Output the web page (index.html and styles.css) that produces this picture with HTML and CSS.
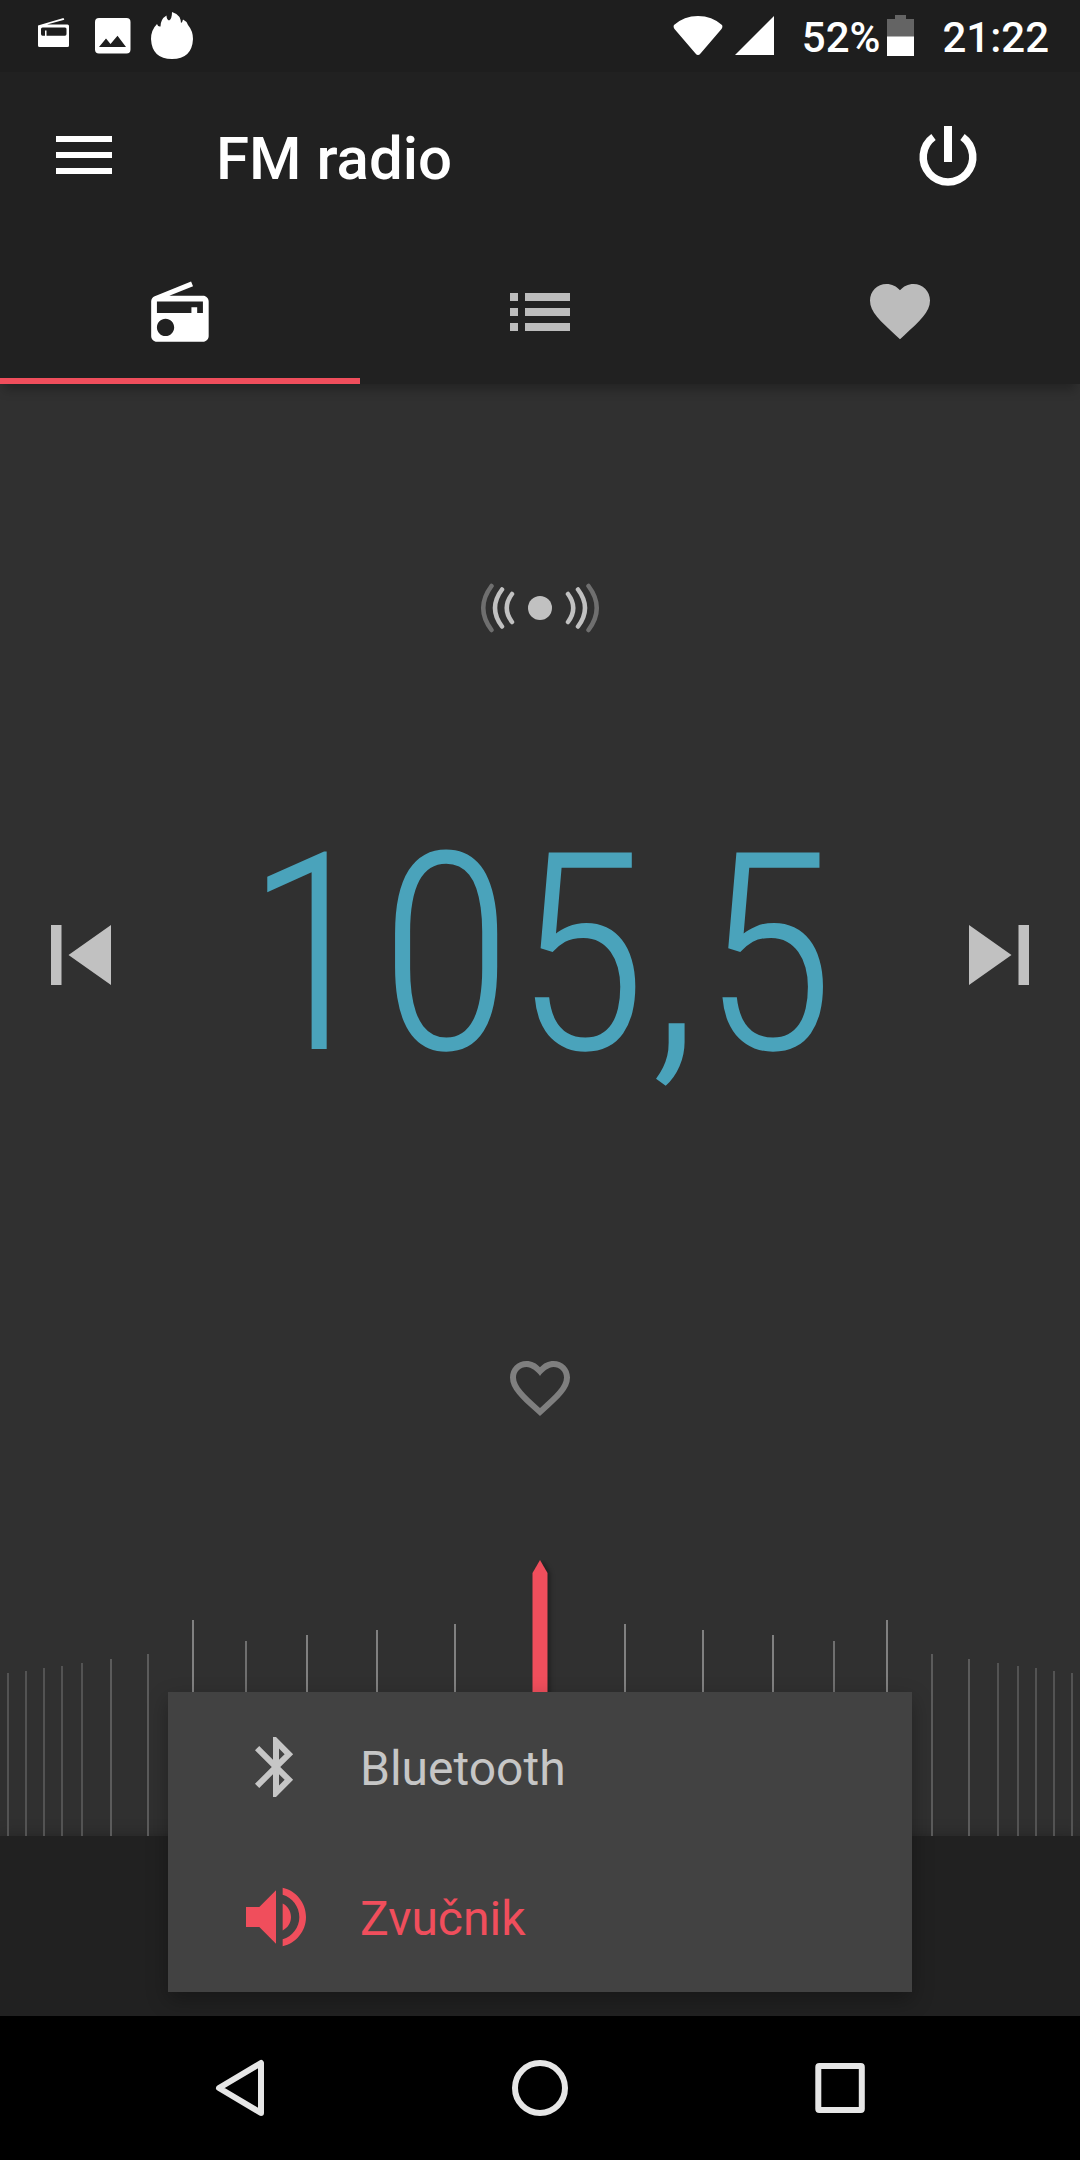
FILE: index.html
```html
<!DOCTYPE html>
<html lang="hr">
<head>
    <meta charset="utf-8">
    <title>FM radio</title>
    <link rel="stylesheet" href="styles.css">
</head>
<body>
    <div class="status-bar">
        <div class="notifications">
            <svg class="status-radio" width="31" height="30" viewBox="0 0 31 30">
                <path fill-rule="evenodd" d="M0 7.5L25.500 0l.8 1.700L9 6.500H29.500q1.500 0 1.500 1.500V27.500q0 1.500-1.500 1.500H1.500Q0 29 0 27.500zM4.500 9.500Q3 9.500 3 11V16q0 1.700 1.500 1.700H7V12.500h1.500v5.200H27q1.500 0 1.500-1.700V11Q28.500 9.500 27 9.500z"/>
            </svg>
            <svg class="status-picture" width="36" height="36" viewBox="0 0 36 36">
                <path fill-rule="evenodd" d="M4 0H31.500Q35.500 0 35.500 4V31.500Q35.500 35.500 31.500 35.500H4Q0 35.500 0 31.500V4Q0 0 4 0zM4 29H31L22.500 17.800L15.500 26L11 20.500z"/>
            </svg>
            <svg class="status-fire" width="42" height="48" viewBox="0 0 42 48">
                <path d="M21 0Q26 1.500 28.500 5Q30 8 30 11Q31.500 10 32 7.500Q35.500 9 37 13Q42 19 42 27Q41 47 21 47Q1 47 0 27Q0 18 6 12Q7 15 9.500 14.500Q9.500 7 15.500 3.500Q15.500 7.500 18 8.500Q21 7 21 0z"/>
            </svg>
        </div>
        <div class="system">
            <svg class="wifi" width="50" height="40" viewBox="0 0 50 40">
                <path d="M1 9Q11 0 25 0T49 9Q50 11 48.500 13L27.500 37.500Q25 40.500 22.500 37.500L1.500 13Q0 11 1 9z"/>
            </svg>
            <svg class="cell" width="39" height="39" viewBox="0 0 39 39">
                <path d="M39 0V39H0z"/>
            </svg>
            <span class="percent">52%</span>
            <svg class="battery" width="27" height="41" viewBox="0 0 27 41">
                <path fill="#646464" d="M8 0H19V4H27V22H0V4H8z"/>
                <path d="M0 21.500H27V41H0z"/>
            </svg>
            <span class="clock">21:22</span>
        </div>
    </div>

    <div class="toolbar">
        <svg class="menu" width="56" height="38" viewBox="0 0 56 38">
            <path d="M0 0H56V6H0zM0 16H56V22H0zM0 32H56V38H0z"/>
        </svg>
        <h1>FM radio</h1>
        <svg class="power" width="60" height="60" viewBox="0 0 60 60">
            <path d="M26 0h8v36h-8z"/>
            <path fill="none" stroke="#fff" stroke-width="7.500" d="M15.500 11A24.800 24.800 0 1 0 44.500 11"/>
        </svg>
    </div>

    <div class="tabs">
        <div class="tab active">
            <svg width="69" height="69" viewBox="0.200 -0.200 24 24">
                <path d="M3.240 6.150C2.510 6.430 2 7.170 2 8v12c0 1.100.89 2 2 2h16c1.110 0 2-.9 2-2V8c0-1.110-.89-2-2-2H8.300l8.260-3.340L15.880 1 3.240 6.150zM7 20c-1.660 0-3-1.340-3-3s1.340-3 3-3 3 1.340 3 3-1.340 3-3 3zm13-8h-2v-2h-2v2H4V8h16v4z"/>
            </svg>
        </div>
        <div class="tab">
            <svg width="60" height="38" viewBox="0 0 60 38">
                <path d="M0 0H8V8H0zM15 0H60V8H15zM0 15H8V23H0zM15 15H60V23H15zM0 30H8V38H0zM15 30H60V38H15z"/>
            </svg>
        </div>
        <div class="tab">
            <svg width="72" height="72" viewBox="0 0.300 24 24">
                <path d="M12 21.350l-1.450-1.320C5.400 15.360 2 12.280 2 8.500 2 5.420 4.420 3 7.500 3c1.740 0 3.410.81 4.500 2.090C13.090 3.810 14.760 3 16.500 3 19.580 3 22 5.420 22 8.500c0 3.780-3.400 6.860-8.550 11.540L12 21.350z"/>
            </svg>
        </div>
    </div>

    <div class="player">
        <svg class="live" width="120" height="50" viewBox="-60 -25 120 50">
            <circle r="12" />
            <g class="waves">
                <path d="M-28-14Q-38.500 0-28 14M28-14Q38.500 0 28 14"/>
                <path d="M-38-18.500Q-52 0-38 18.500M38-18.500Q52 0 38 18.500"/>
                <path class="dim" d="M-48.500-22Q-65 0-48.500 22M48.500-22Q65 0 48.500 22"/>
            </g>
        </svg>

        <div class="tuner">
            <svg width="60" height="60" viewBox="0 0 60 60">
                <path d="M0 0H10.500V60H0zM60 0V60L17.500 30z"/>
            </svg>
            <div class="frequency">105,5</div>
            <svg width="60" height="60" viewBox="0 0 60 60">
                <path d="M0 0L42.500 30L0 60zM49.500 0H60V60H49.500z"/>
            </svg>
        </div>

        <svg class="favorite" width="72" height="72" viewBox="0 0 24 24">
            <path d="M16.500 3c-1.740 0-3.410.81-4.500 2.090C10.910 3.810 9.240 3 7.500 3 4.420 3 2 5.420 2 8.500c0 3.780 3.400 6.860 8.550 11.540L12 21.350l1.450-1.320C18.600 15.360 22 12.280 22 8.500 22 5.420 19.580 3 16.500 3zm-4.400 15.550l-.1.100-.1-.1C7.140 14.240 4 11.390 4 8.500 4 6.500 5.500 5 7.500 5c1.540 0 3.500 1.500 4.500 3 1-1.500 2.960-3 4.500-3 2 0 3.500 1.500 3.500 3.500 0 2.890-3.140 5.740-7.900 10.050z"/>
        </svg>

        <svg class="dial" width="1080" height="276" viewBox="0 0 1080 276">
            <path stroke="#535353" d="M8 113V276M26 111V276M44 108V276M62 106V276M82 103V276M998 103V276M1018 106V276M1036 108V276M1054 111V276M1072 113V276"/>
            <path stroke="#5b5b5b" d="M111 99V276M148 94V276M932 94V276M969 99V276"/>
            <path stroke="#6f6f6f" d="M246 81V276M834 81V276"/>
            <path stroke="#808080" d="M193 60V276M307 75V276M377 70V276M455 64V276M625 64V276M703 70V276M773 75V276M887 60V276"/>
            <path class="needle" d="M532.500 276V13L540 0L547.500 13V276z"/>
        </svg>
    </div>

    <div class="bottom-bar"></div>

    <div class="output-menu">
        <div class="output">
            <svg width="72" height="72" viewBox="0 0 24 24">
                <path d="M17.710 7.710L12 2h-1v7.590L6.410 5 5 6.410 10.590 12 5 17.590 6.410 19 11 14.410V22h1l5.710-5.710-4.300-4.290 4.300-4.290zM13 5.830l1.880 1.880L13 9.590V5.830zm1.880 10.460L13 18.170v-3.760l1.880 1.880z"/>
            </svg>
            <span>Bluetooth</span>
        </div>
        <div class="output selected">
            <svg width="80" height="80" viewBox="0 0 24 24">
                <path d="M3 9v6h4l5 5V4L7 9H3zm13.500 3c0-1.770-1.020-3.290-2.500-4.030v8.050c1.480-.73 2.500-2.250 2.500-4.020zM14 3.230v2.060c2.890.86 5 3.540 5 6.710s-2.110 5.850-5 6.710v2.060c4.010-.91 7-4.490 7-8.770s-2.990-7.860-7-8.770z"/>
            </svg>
            <span>Zvučnik</span>
        </div>
    </div>

    <div class="nav-bar">
        <svg width="60" height="60" viewBox="0 0 60 60">
            <path d="M51 5V55L9 30z"/>
        </svg>
        <svg width="60" height="60" viewBox="0 0 60 60">
            <circle cx="30" cy="30" r="25"/>
        </svg>
        <svg width="60" height="60" viewBox="0 0 60 60">
            <rect x="8.300" y="8" width="43.500" height="44" rx="1"/>
        </svg>
    </div>
</body>
</html>
```
FILE: styles.css
```css
* {
    box-sizing: border-box;
}
body {
    margin: 0;
    width: 1080px;
    height: 2160px;
    position: relative;
    overflow: hidden;
    background-color: #303030;
    color: #fff;
    font-family: Roboto, "Noto Sans", sans-serif;
}
svg {
    display: block;
    flex: none;
    fill: currentColor;
}
.status-bar {
    display: flex;
    justify-content: space-between;
    height: 72px;
    padding: 0 31px 0 38px;
    background-color: #1e1e1e;
}
.notifications {
    display: flex;
    align-items: flex-start;
}
.status-radio {
    margin-top: 18px;
}
.status-picture {
    margin: 18px 0 0 26px;
}
.status-fire {
    margin: 12px 0 0 20px;
}
.system {
    display: flex;
    align-items: flex-start;
    font-size: 42px;
    font-weight: 500;
    line-height: 76px;
}
.wifi {
    margin-top: 16px;
}
.cell {
    margin: 16px 28px 0 12px;
}
.battery {
    margin: 15px 28px 0 7px;
}
.toolbar {
    display: flex;
    align-items: center;
    height: 168px;
    padding: 0 102px 0 56px;
    background-color: #212121;
}
.menu {
    margin-bottom: 2px;
}
.toolbar h1 {
    flex: 1;
    margin: 4px 0 0 104px;
    font-size: 60px;
    font-weight: 500;
}
.tabs {
    display: flex;
    height: 144px;
    background-color: #212121;
    box-shadow: 0 10px 10px -4px rgba(0, 0, 0, 0.25);
}
.tab {
    flex: 1;
    display: flex;
    align-items: center;
    justify-content: center;
    color: #bcbcbc;
}
.tab.active {
    color: #fff;
    box-shadow: inset 0 -6px #f04e5c;
}
.player {
    display: flex;
    flex-direction: column;
    align-items: center;
    height: 1452px;
    color: #c1c1c1;
}
.live {
    margin: 199px 0;
}
.waves {
    fill: none;
    stroke: #c1c1c1;
    stroke-width: 4.5;
    stroke-linecap: round;
}
.waves .dim {
    stroke: #6f6f6f;
}
.tuner {
    display: flex;
    align-items: center;
    justify-content: space-between;
    width: 100%;
    height: 246px;
    padding: 0 51px;
}
.frequency {
    color: #4aa3bb;
    font-size: 276.5px;
    font-weight: 320;
    font-stretch: 75%;
    line-height: 246px;
    white-space: nowrap;
}
.favorite {
    margin-top: 274px;
    color: #7f7f7f;
}
.dial {
    margin-top: auto;
    stroke-width: 2;
}
.needle {
    fill: #f04e5c;
    filter: drop-shadow(3px 0 2px rgba(0, 0, 0, 0.3));
}
.bottom-bar {
    height: 180px;
    background-color: #212121;
    box-shadow: 0 -2px 14px rgba(0, 0, 0, 0.2);
}
.output-menu {
    position: absolute;
    left: 168px;
    top: 1692px;
    width: 744px;
    background-color: #424242;
    box-shadow: 0 8px 20px rgba(0, 0, 0, 0.3);
    color: #c6c6c6;
}
.output {
    display: flex;
    align-items: center;
    gap: 48px;
    height: 150px;
    padding-left: 72px;
    font-size: 48px;
}
.output span {
    padding-top: 2px;
}
.output.selected {
    gap: 44px;
    padding-left: 68px;
    color: #f04e5c;
}
.nav-bar {
    position: relative;
    display: flex;
    justify-content: space-between;
    height: 144px;
    padding: 42px 210px;
    background-color: #000;
}
.nav-bar svg {
    fill: none;
    stroke: #e6e6e6;
    stroke-width: 6;
    stroke-linejoin: round;
}
```
